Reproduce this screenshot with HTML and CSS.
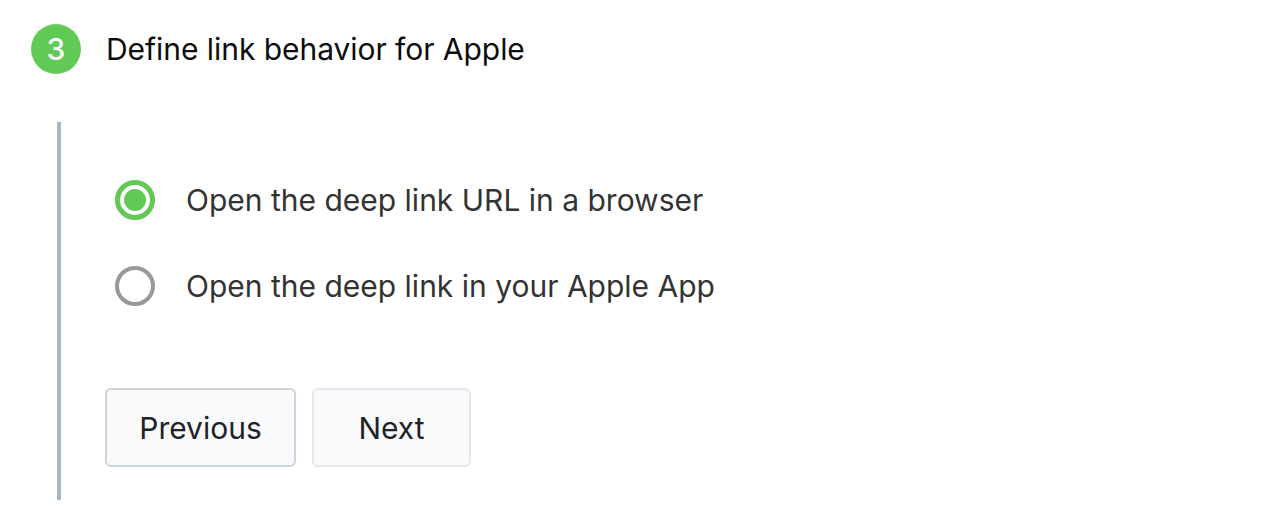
FILE: index.html
```html
<!DOCTYPE html>
<html>
<head>
<meta charset="utf-8">
<link rel="stylesheet" href="styles.css">
</head>
<body>
<div class="step">
  <div class="step-head">
    <span class="step-num">3</span>
    <span class="step-title">Define link behavior for Apple</span>
  </div>
  <div class="step-body">
    <div class="options">
      <label class="option">
        <span class="radio checked"><span class="dot"></span></span>
        <span class="option-text">Open the deep link URL in a browser</span>
      </label>
      <label class="option">
        <span class="radio"></span>
        <span class="option-text">Open the deep link in your Apple App</span>
      </label>
    </div>
    <div class="actions">
      <button class="btn btn-prev">Previous</button>
      <button class="btn btn-next">Next</button>
    </div>
  </div>
</div>
</body>
</html>
```

FILE: styles.css
```css
* { box-sizing: border-box; }
html, body { margin: 0; padding: 0; background: #ffffff; }
body {
  font-family: Inter, "Noto Sans", sans-serif;
  width: 1262px;
  height: 528px;
  overflow: hidden;
}
.step { padding: 24px 0 0 31px; }
.step-head {
  display: flex;
  align-items: center;
  height: 50px;
}
.step-num {
  width: 50px;
  height: 50px;
  border-radius: 50%;
  background: #62c954;
  color: #ffffff;
  font-size: 30px;
  font-weight: 500;
  display: flex;
  align-items: center;
  justify-content: center;
  flex: none;
}
.step-title {
  margin-left: 25px;
  font-size: 30px;
  color: #0d0d0d;
  letter-spacing: -0.05px;
}
.step-body {
  margin: 48px 0 0 26px;
  border-left: 4px solid #a7b6c4;
  height: 378px;
  padding: 58px 0 0 44px;
}
.options {
  display: flex;
  flex-direction: column;
  gap: 46px;
  padding-left: 10px;
}
.option {
  display: flex;
  align-items: center;
  height: 40px;
}
.radio {
  width: 40px;
  height: 40px;
  border-radius: 50%;
  border: 4px solid #999999;
  display: flex;
  align-items: center;
  justify-content: center;
  flex: none;
}
.radio.checked { border: 5px solid #62c954; }
.dot {
  width: 22px;
  height: 22px;
  border-radius: 50%;
  background: #62c954;
}
.option-text {
  margin-left: 31px;
  font-size: 30px;
  color: #333333;
}
.actions {
  display: flex;
  gap: 16px;
  margin-top: 82px;
}
.btn {
  height: 79px;
  border-radius: 6px;
  background: #f8fafc;
  font-family: Inter, "Noto Sans", sans-serif;
  font-size: 30px;
  color: #1f2328;
  padding: 0;
}
.btn-prev { width: 191px; border: 2px solid #cbd5df; }
.btn-next { width: 159px; border: 2px solid #e3e8ee; }
```
